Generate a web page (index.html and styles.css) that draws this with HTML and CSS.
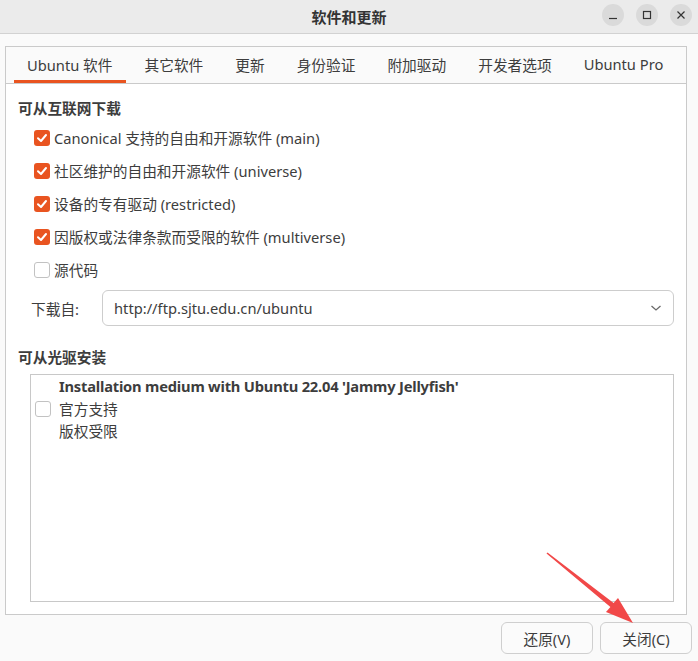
FILE: index.html
```html
<!DOCTYPE html>
<html>
<head>
    <title>软件和更新</title>
    <link rel="stylesheet" href="styles.css">
</head>
<body>
    <header class="titlebar">
        <div></div>
        <div class="title">软件和更新</div>
        <div class="win-controls">
            <span class="win-btn">
                <svg width="22" height="22" viewBox="0 0 22 22"><path d="M7 14.5H15" /></svg>
            </span>
            <span class="win-btn">
                <svg width="22" height="22" viewBox="0 0 22 22"><rect x="7.5" y="7.5" width="7" height="7" /></svg>
            </span>
            <span class="win-btn">
                <svg width="22" height="22" viewBox="0 0 22 22"><path d="M7.5 7.5L14.5 14.5M14.5 7.5L7.5 14.5" /></svg>
            </span>
        </div>
    </header>

    <main class="window-body">
        <div class="notebook">
            <nav class="tabs">
                <span class="tab active">Ubuntu 软件</span>
                <span class="tab">其它软件</span>
                <span class="tab">更新</span>
                <span class="tab">身份验证</span>
                <span class="tab">附加驱动</span>
                <span class="tab">开发者选项</span>
                <span class="tab">Ubuntu Pro</span>
            </nav>

            <section class="page">
                <h2 class="section-title">可从互联网下载</h2>
                <ul class="options">
                    <li class="option"><span class="check checked"><svg width="16" height="16" viewBox="0 0 16 16"><path d="M4 8.2L7 11L12 5" /></svg></span>Canonical 支持的自由和开源软件 (main)</li>
                    <li class="option"><span class="check checked"><svg width="16" height="16" viewBox="0 0 16 16"><path d="M4 8.2L7 11L12 5" /></svg></span>社区维护的自由和开源软件 (universe)</li>
                    <li class="option"><span class="check checked"><svg width="16" height="16" viewBox="0 0 16 16"><path d="M4 8.2L7 11L12 5" /></svg></span>设备的专有驱动 (restricted)</li>
                    <li class="option"><span class="check checked"><svg width="16" height="16" viewBox="0 0 16 16"><path d="M4 8.2L7 11L12 5" /></svg></span>因版权或法律条款而受限的软件 (multiverse)</li>
                    <li class="option"><span class="check"></span>源代码</li>
                </ul>

                <div class="source-row">
                    <label class="source-label">下载自:</label>
                    <div class="combo">
                        <span>http://ftp.sjtu.edu.cn/ubuntu</span>
                        <svg width="12" height="8" viewBox="0 0 12 8"><path d="M1.5 2L6 6L10.5 2" /></svg>
                    </div>
                </div>

                <h2 class="section-title cdrom">可从光驱安装</h2>
                <div class="media-list">
                    <div class="media-item">
                        <span class="check"></span>
                        <div class="media-text">
                            <strong>Installation medium with Ubuntu 22.04 'Jammy Jellyfish'</strong>
                            <span>官方支持</span>
                            <span>版权受限</span>
                        </div>
                    </div>
                </div>
            </section>
        </div>

        <div class="actions">
            <button>还原(V)</button>
            <button>关闭(C)</button>
        </div>
    </main>

    <svg class="arrow" width="100" height="90" viewBox="540 545 100 90">
        <polygon points="546.5,553.4 547.5,552.6 613.6,603.1 618,598 633,623 606,612 610.4,606.9" />
    </svg>
</body>
</html>
```

FILE: styles.css
```css
* {
    box-sizing: border-box;
}
body {
    margin: 0;
    width: 698px;
    height: 661px;
    overflow: hidden;
    position: relative;
    background-color: #fafafa;
    color: #3d3d3d;
    font-family: "Noto Sans", "Noto Sans CJK SC", sans-serif;
    font-size: 14.7px;
}
.titlebar {
    display: grid;
    grid-template-columns: 1fr auto 1fr;
    align-items: center;
    height: 34px;
    background-color: #ebebeb;
    border-bottom: 1px solid #d2d2d2;
}
.title {
    font-weight: bold;
    font-size: 15px;
    color: #333;
    padding-bottom: 1px;
}
.win-controls {
    display: flex;
    justify-content: flex-end;
    gap: 12px;
    padding-right: 6px;
}
.win-btn {
    display: flex;
    width: 22px;
    height: 22px;
    border-radius: 50%;
    background-color: #dadada;
    margin-top: -3px;
}
.win-btn svg {
    fill: none;
    stroke: #333;
    stroke-width: 1.2;
}
.window-body {
    padding: 12px 11px 0 5px;
}
.notebook {
    height: 569px;
    border: 1px solid #cacaca;
    display: flex;
    flex-direction: column;
    background-color: #fff;
}
.tabs {
    display: flex;
    height: 37px;
    padding-left: 5px;
    background-color: #fafafa;
    border-bottom: 1px solid #cacaca;
}
.tab {
    display: flex;
    align-items: center;
    margin: 0 3px;
    padding: 0 13px;
    border-bottom: 3px solid transparent;
    padding-top: 1px;
}
.tab.active {
    border-bottom-color: #e95420;
}
.page {
    flex: 1;
    display: flex;
    flex-direction: column;
    padding: 14px 12px 12px 12px;
}
.section-title {
    margin: 0;
    font-size: 14.7px;
    font-weight: bold;
    line-height: 20px;
}
.options {
    list-style: none;
    margin: 3px 0 0 0;
    padding: 0 0 0 16px;
}
.option {
    display: flex;
    align-items: center;
    height: 33px;
    gap: 4px;
}
.check {
    display: flex;
    flex: none;
    width: 16px;
    height: 16px;
    border-radius: 3px;
    border: 1px solid #c2c2c2;
    background-color: #fff;
}
.check.checked {
    border: none;
    background-color: #e95420;
}
.check svg {
    fill: none;
    stroke: #fff;
    stroke-width: 2;
    stroke-linecap: round;
    stroke-linejoin: round;
}
.source-row {
    display: flex;
    align-items: center;
    margin-top: 4px;
    padding-left: 13px;
}
.source-label {
    width: 71px;
}
.combo {
    flex: 1;
    display: flex;
    align-items: center;
    justify-content: space-between;
    height: 36px;
    padding: 0 11px;
    border: 1px solid #cdcdcd;
    border-radius: 6px;
    background-color: #fff;
}
.combo svg {
    fill: none;
    stroke: #6a6a6a;
    stroke-width: 1.3;
}
.cdrom {
    margin-top: 21px;
}
.media-list {
    flex: 1;
    margin: 7px 0 0 12px;
    border: 1px solid #c8c8c8;
    background-color: #fff;
}
.media-item {
    display: flex;
    align-items: center;
    gap: 8px;
    padding-left: 4px;
}
.media-text {
    display: flex;
    flex-direction: column;
    line-height: 22.5px;
}
.media-text strong {
    letter-spacing: -0.2px;
}
.actions {
    display: flex;
    justify-content: flex-end;
    gap: 7px;
    margin-top: 7px;
    margin-right: -5px;
}
.actions button {
    width: 92px;
    height: 32px;
    margin: 0;
    font-family: inherit;
    font-size: 14.7px;
    color: #3d3d3d;
    background-color: #fbfbfb;
    border: 1px solid #cfcfcf;
    border-radius: 6px;
}
.arrow {
    position: absolute;
    left: 540px;
    top: 545px;
}
.arrow polygon {
    fill: #f14848;
}
```
